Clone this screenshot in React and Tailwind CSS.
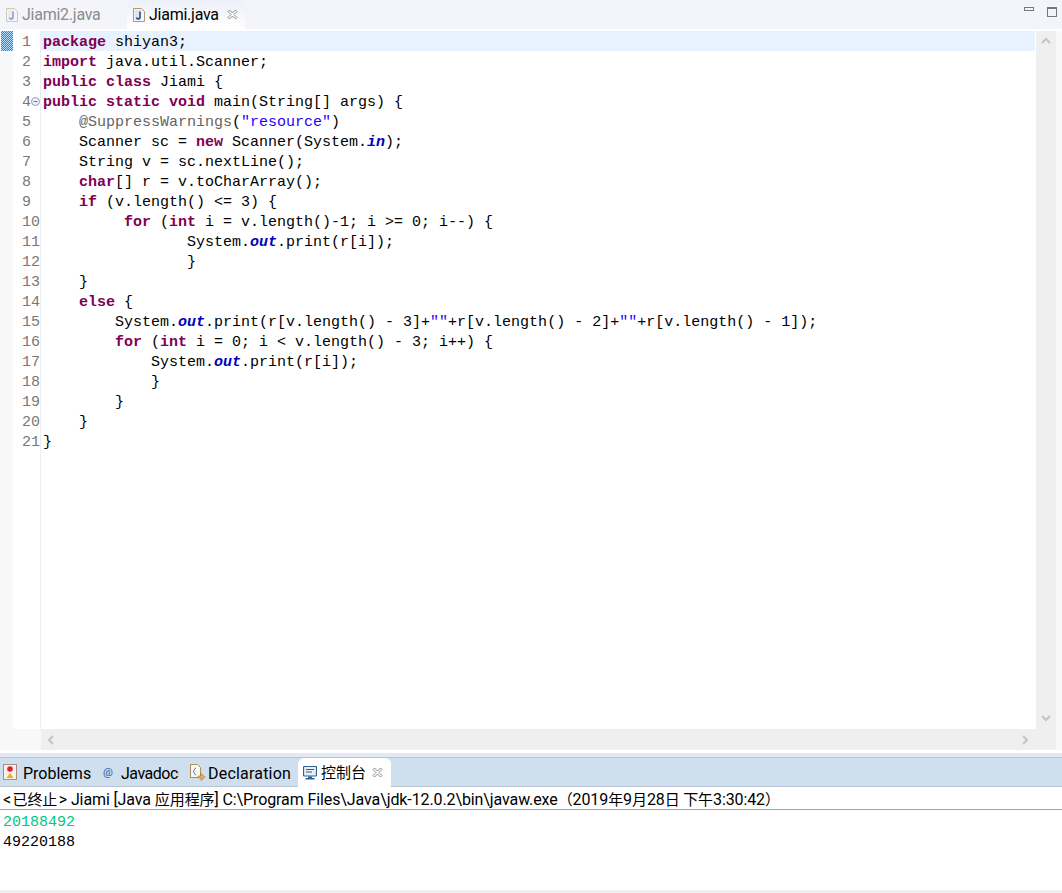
import React from "react";

const codeLines = [
  "package shiyan3;",
  "import java.util.Scanner;",
  "public class Jiami {",
  "public static void main(String[] args) {",
  '    @SuppressWarnings("resource")',
  "    Scanner sc = new Scanner(System.in);",
  "    String v = sc.nextLine();",
  "    char[] r = v.toCharArray();",
  "    if (v.length() <= 3) {",
  "         for (int i = v.length()-1; i >= 0; i--) {",
  "                System.out.print(r[i]);",
  "                }",
  "    }",
  "    else {",
  '        System.out.print(r[v.length() - 3]+""+r[v.length() - 2]+""+r[v.length() - 1]);',
  "        for (int i = 0; i < v.length() - 3; i++) {",
  "            System.out.print(r[i]);",
  "            }",
  "        }",
  "    }",
  "}",
];

const tokenRe = /("[^"]*"|@\w+|\b(?:package|import|public|class|static|void|new|char|if|else|for|int)\b|\b(?:out|in)\b(?=\.|\)))/;

function tokenClass(part) {
  if (part.startsWith('"')) return "text-[#2a00ff]";
  if (part.startsWith("@")) return "text-[#646464]";
  if (part === "out" || part === "in") return "text-[#0000c0] font-bold italic";
  if (tokenRe.test(part)) return "text-[#7f0055] font-bold";
  return "";
}

function CodeLine({ text, active }) {
  const parts = text.split(tokenRe);
  return (
    <div className={`h-5 leading-[24px] pl-[2px] whitespace-pre ${active ? "bg-[#e8f2fe]" : ""}`}>
      {parts.map((p, i) => (
        <span key={i} className={tokenClass(p)}>
          {p}
        </span>
      ))}
    </div>
  );
}

function JavaFileIcon({ muted }) {
  return (
    <svg width="12" height="14" viewBox="0 0 12 14" className={`shrink-0 ${muted ? "opacity-50" : ""}`}>
      <path d="M.5 .5h8l3 3v10H.5z" fill="#f4f6fa" stroke="#b29a66" />
      <path d="M2 2h6v10H2z" fill="#dbe6f3" />
      <path d="M7 3.5v5.5a1.7 1.7 0 0 1-3.4 .4" fill="none" stroke="#2f4f86" strokeWidth="1.6" />
    </svg>
  );
}

function CloseIcon() {
  return (
    <svg width="11" height="11" viewBox="0 0 11 11" className="shrink-0">
      <path d="M1 2.5 2.5 1 5.5 4 8.5 1 10 2.5 7 5.5 10 8.5 8.5 10 5.5 7 2.5 10 1 8.5 4 5.5 1 2.5z" fill="#fff" stroke="#8a8a8a" strokeWidth="1" />
    </svg>
  );
}

function Chevron({ d }) {
  return (
    <svg width="10" height="10" viewBox="0 0 10 10">
      <path d={d} fill="none" stroke="#c4c4c4" strokeWidth="2" />
    </svg>
  );
}

function ProblemsIcon() {
  return (
    <svg width="16" height="16" viewBox="0 0 16 16" className="shrink-0">
      <rect x=".5" y=".5" width="13" height="15" fill="#f7f1ea" stroke="#a98c80" />
      <circle cx="7" cy="5" r="2.8" fill="#e0202a" />
      <path d="M7 9 10.5 14h-7z" fill="#f5ae12" />
    </svg>
  );
}

function DeclarationIcon() {
  return (
    <svg width="17" height="17" viewBox="0 0 17 17" className="shrink-0">
      <path d="M1.5 .5h7l3 3v10h-10z" fill="#fbf7ee" stroke="#a98d5c" />
      <path d="M7 4C5 4 6 7 4 7.5 6 8 5 11 7 11" fill="none" stroke="#4a7fb5" />
      <path d="M9 12h3v-2.5l4 3.500-4 3.500V14H9z" fill="#e9b44c" stroke="#a9792c" strokeWidth=".6" />
    </svg>
  );
}

function ConsoleIcon() {
  return (
    <svg width="14" height="14" viewBox="0 0 14 14" className="shrink-0">
      <rect x=".5" y=".5" width="13" height="9.500" rx="1" fill="#e8eef6" stroke="#2f5f96" strokeWidth="1.2" />
      <path d="M3 3.500h8M3 6h6" stroke="#2f5f96" />
      <path d="M5 10.500h4v1.500H5zM2.500 12h9v1.500h-9z" fill="#2f5f96" />
    </svg>
  );
}

function ViewTab({ width, iconWidth, icon, label, tracking }) {
  return (
    <div className={`flex items-center pt-[3px] ${width}`}>
      <div className={`flex justify-start shrink-0 -mt-[3px] ${iconWidth}`}>{icon}</div>
      <span className={tracking}>{label}</span>
    </div>
  );
}

export default function App() {
  const uiFont = "font-['Roboto','Noto_Sans_CJK_SC',sans-serif]";
  const cjk = "text-[15px]";

  return (
    <div className={`w-[1062px] h-[893px] overflow-hidden bg-white flex flex-col text-[16px] text-black ${uiFont}`}>
      {/* editor tabs */}
      <div className="h-[29px] shrink-0 bg-[#f3f5fb] flex justify-between">
        <div className="flex">
          <div className="w-[127px] flex items-center gap-[4px] pl-[6px] text-[#8c8c8c]">
            <JavaFileIcon muted />
            <span className="tracking-[-0.25px] pt-[1px]">Jiami2.java</span>
          </div>
          <div className="w-[118px] flex items-center gap-[4px] pl-[6px] bg-gradient-to-b from-[#edf0f8] to-white rounded-t-lg">
            <JavaFileIcon />
            <span className="tracking-[-0.25px] pt-[1px]">Jiami.java</span>
            <span className="ml-[4px]">
              <CloseIcon />
            </span>
          </div>
        </div>
        <div className="flex items-start gap-[13px] pt-[7px] pr-[5px]">
          <div className="w-[10px] h-[4px] border border-[#777]" />
          <div className="w-[10px] h-[10px] border border-[#777] border-t-[2px]" />
        </div>
      </div>
      <div className="h-[2px] shrink-0" />

      {/* editor */}
      <div className="h-[719px] shrink-0 flex">
        <div className="w-[13px] shrink-0 bg-[#f8f8f8] pl-[1px]">
          <svg width="12" height="20" viewBox="0 0 12 20">
            <defs>
              <pattern id="dither" width="2" height="2" patternUnits="userSpaceOnUse">
                <rect width="2" height="2" fill="#1f8ae8" />
                <rect width="1" height="1" fill="#b5dbfa" />
                <rect x="1" y="1" width="1" height="1" fill="#b5dbfa" />
              </pattern>
            </defs>
            <rect width="12" height="20" fill="url(#dither)" />
          </svg>
        </div>
        <div className="w-[1023px] shrink-0 flex flex-col">
          <div className="flex-1 flex min-h-0">
            <div className="w-[28px] shrink-0 bg-white border-r border-[#eeeeee] text-[#787878] font-['Liberation_Mono',monospace] text-[15px]">
              {codeLines.map((_, i) => (
                <div key={i} className="relative h-5 leading-[24px] pl-[9px] whitespace-pre">
                  {i + 1}
                  {i === 3 && (
                    <svg width="9" height="9" viewBox="0 0 9 9" className="absolute left-[18px] top-[6px]">
                      <circle cx="4.500" cy="4.500" r="4" fill="#eef2f7" stroke="#8fa3b8" />
                      <path d="M2.500 4.500h4" stroke="#5c7590" />
                    </svg>
                  )}
                </div>
              ))}
            </div>
            <div className="flex-1 font-['Liberation_Mono',monospace] text-[15px] mr-[1px]">
              {codeLines.map((line, i) => (
                <CodeLine key={i} text={line} active={i === 0} />
              ))}
            </div>
          </div>
          <div className="h-[21px] shrink-0 flex">
            <div className="w-[28px] bg-[#f8f8f8]" />
            <div className="flex-1 bg-[#efefef] flex items-center justify-between pl-[5px] pr-[6px]">
              <Chevron d="M7 1 3 5 7 9" />
              <Chevron d="M3 1 7 5 3 9" />
            </div>
          </div>
        </div>
        <div className="w-[20px] shrink-0 bg-[#efefef] flex flex-col justify-between items-center pt-[5px] pb-[27px]">
          <Chevron d="M1 7 5 3 9 7" />
          <Chevron d="M1 3 5 7 9 3" />
        </div>
        <div className="w-[6px] shrink-0 bg-[#f8f8f8]" />
      </div>
      <div className="h-[3px] shrink-0" />

      {/* console view */}
      <div className="h-[4px] shrink-0 bg-[#e3e8f5]" />
      <div className="h-[30px] shrink-0 bg-[#cfdfee] border-t border-b border-[#b9c3d6] flex">
        <ViewTab width="w-[103px]" iconWidth="w-[23px] pl-[3px]" icon={<ProblemsIcon />} label="Problems" />
        <ViewTab
          width="w-[85px]"
          iconWidth="w-[18px]"
          icon={<span className="text-[11px] text-[#4a7fb5] font-bold mt-[2px]">@</span>}
          label="Javadoc"
          tracking="tracking-[-0.5px]"
        />
        <ViewTab width="w-[110px]" iconWidth="w-[20px] pl-[1px]" icon={<DeclarationIcon />} label="Declaration" tracking="tracking-[0.2px]" />
        <div className="w-[93px] h-[29px] -mb-px bg-white rounded-t-md flex items-center pl-[5px] gap-[4px]">
          <ConsoleIcon />
          <span className={`${cjk} pt-[2px]`}>控制台</span>
          <span className="ml-[2px]">
            <CloseIcon />
          </span>
        </div>
      </div>
      <div className="h-[23px] shrink-0 border-b border-[#a0a0a0] pl-[3px] leading-[26px] whitespace-pre tracking-[-0.1px]">
        {"<"}
        <span className={`${cjk} mx-[1.500px]`}>已终止</span>
        {"> Jiami [Java "}
        <span className={cjk}>应用程序</span>
        {"] C:\\Program Files\\Java\\jdk-12.0.2\\bin\\javaw.exe"}
        <span className={cjk}>（</span>
        {"2019"}
        <span className={cjk}>年</span>
        {"9"}
        <span className={cjk}>月</span>
        {"28"}
        <span className={cjk}>日 下午</span>
        {"3:30:42"}
        <span className={cjk}>）</span>
      </div>
      <div className="flex-1 font-['Liberation_Mono',monospace] text-[15px] pl-[3px] pt-[3px]">
        <div className="h-5 leading-[20px] text-[#00c87f]">20188492</div>
        <div className="h-5 leading-[20px]">49220188</div>
      </div>
      <div className="h-[3px] shrink-0 bg-[#f0f0f0]" />
    </div>
  );
}
